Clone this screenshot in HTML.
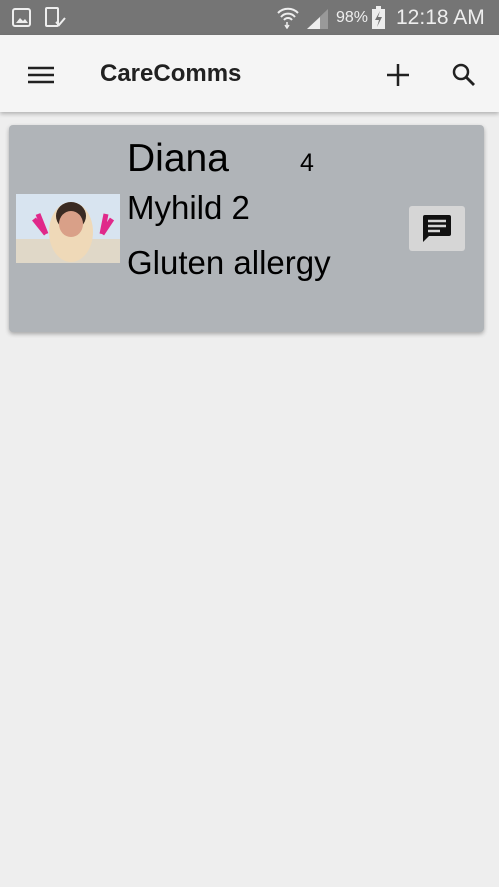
<!DOCTYPE html>
<html><head><style>
body{margin:0;width:499px;height:887px;background:#eeeeee;font-family:"Liberation Sans",sans-serif;position:relative;overflow:hidden}
.sb{position:absolute;left:0;top:0;width:499px;height:35px;background:#757575;color:#fff}
.tb{position:absolute;left:0;top:35px;width:499px;height:77px;background:#f5f5f5;box-shadow:0 2px 4px rgba(0,0,0,.25)}
.card{position:absolute;left:9px;top:125px;width:475px;height:207px;background:#b0b4b8;border-radius:4px;box-shadow:0 2px 4px rgba(0,0,0,.3)}
.t{position:absolute;color:#000;white-space:nowrap}
</style></head><body>
<div class="sb">
<svg style="position:absolute;left:12px;top:8px" width="20" height="20"><rect x="1" y="1" width="17" height="17" rx="2" fill="none" stroke="#eee" stroke-width="2"/><path d="M4 15 L8 10 L11 13 L13 11 L16 15Z" fill="#eee"/></svg>
<svg style="position:absolute;left:45px;top:7px" width="22" height="22"><rect x="1" y="1" width="12" height="18" rx="1" fill="none" stroke="#eee" stroke-width="2"/><path d="M11 15 L14 18 L20 11" fill="none" stroke="#eee" stroke-width="2"/></svg>
<svg style="position:absolute;left:276px;top:5px" width="24" height="24"><path d="M2 8 A14 14 0 0 1 22 8 M5 12 A9 9 0 0 1 19 12 M8 15 A5 5 0 0 1 16 15" fill="none" stroke="#eee" stroke-width="2"/><path d="M11 17v6M9 20l2 3 2-3" stroke="#eee" fill="none" stroke-width="1.5"/></svg>
<svg style="position:absolute;left:306px;top:8px" width="24" height="22"><path d="M1 21 L22 1 L22 21Z" fill="#999"/><path d="M1 21 L14 9 L14 21Z" fill="#eee"/></svg>
<span class="t" style="left:336px;top:9px;font-size:16px;color:#eee">98%</span>
<svg style="position:absolute;left:371px;top:6px" width="16" height="24"><rect x="1" y="3" width="13" height="20" fill="#eee"/><rect x="5" y="0" width="5" height="3" fill="#eee"/><path d="M9 5 L4 14 L8 14 L6 21 L11 11 L7 11Z" fill="#757575"/></svg>
<span class="t" style="left:396px;top:6px;font-size:21px;color:#eee">12:18 AM</span>
</div>
<div class="tb">
<svg style="position:absolute;left:28px;top:31px" width="26" height="18"><path d="M0 2h26M0 9h26M0 16h26" stroke="#212121" stroke-width="2.5"/></svg>
<span class="t" style="left:100px;top:25px;font-size:24px;color:#212121;font-weight:bold">CareComms</span>
<svg style="position:absolute;left:387px;top:29px" width="22" height="22"><path d="M11 0v22M0 11h22" stroke="#212121" stroke-width="2.5"/></svg>
<svg style="position:absolute;left:452px;top:28px" width="24" height="24"><circle cx="9" cy="9" r="7" fill="none" stroke="#212121" stroke-width="2.5"/><path d="M14 14 L22 22" stroke="#212121" stroke-width="2.8"/></svg>
</div>
<div class="card">
<svg style="position:absolute;left:7px;top:69px" width="104" height="69">
<rect width="104" height="69" fill="#d8e4f0"/><rect y="45" width="104" height="24" fill="#e0d8c8"/>
<ellipse cx="55" cy="38" rx="22" ry="30" fill="#efd9b8"/><ellipse cx="55" cy="22" rx="15" ry="14" fill="#3a2a22"/><ellipse cx="55" cy="30" rx="12" ry="13" fill="#d9a088"/>
<path d="M30 40 L18 25 M30 40 L22 20 M86 40 L96 25 M86 40 L90 20" stroke="#e0288a" stroke-width="5"/>
</svg>
<span class="t" style="left:118px;top:12px;font-size:39px">Diana</span>
<span class="t" style="left:291px;top:24px;font-size:25px">4</span>
<span class="t" style="left:118px;top:64px;font-size:33px">Myhild 2</span>
<span class="t" style="left:118px;top:119px;font-size:33px">Gluten allergy</span>
<div style="position:absolute;left:400px;top:81px;width:56px;height:45px;background:#d6d6d6;border-radius:3px">
<svg style="position:absolute;left:14px;top:9px" width="28" height="28"><path d="M0 2 Q0 0 2 0 H26 Q28 0 28 2 V19 Q28 21 26 21 H6 L0 27Z" fill="#111"/><path d="M5 6h18M5 11h18M5 16h12" stroke="#d6d6d6" stroke-width="2.5"/></svg>
</div>
</div>
</body></html>
